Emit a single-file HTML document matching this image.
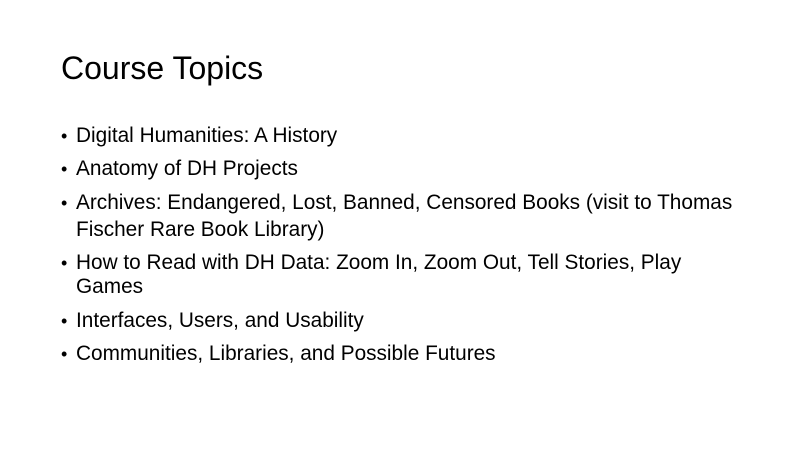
<!DOCTYPE html>
<html><head><style>
body{margin:0;width:800px;height:449px;background:#fff;overflow:hidden;position:relative;font-family:"Liberation Sans",Arial,sans-serif;color:#000}
.t{position:absolute;left:61px;top:50px;font-size:32px;line-height:36px;white-space:nowrap}
.l{position:absolute;left:76px;font-size:20.8px;line-height:20px;white-space:nowrap}
.b{position:absolute;left:61px;font-size:18px;line-height:20px}
</style></head><body>
<div class="t">Course Topics</div>
<div class="b" style="top:126px">•</div><div class="l" style="top:126px">Digital Humanities: A History</div>
<div class="b" style="top:159px">•</div><div class="l" style="top:159px">Anatomy of DH Projects</div>
<div class="b" style="top:193px">•</div><div class="l" style="top:193px">Archives: Endangered, Lost, Banned, Censored Books (visit to Thomas</div>
<div class="l" style="top:220px">Fischer Rare Book Library)</div>
<div class="b" style="top:253px">•</div><div class="l" style="top:253px">How to Read with DH Data: Zoom In, Zoom Out, Tell Stories, Play</div>
<div class="l" style="top:277px">Games</div>
<div class="b" style="top:311px">•</div><div class="l" style="top:311px">Interfaces, Users, and Usability</div>
<div class="b" style="top:344px">•</div><div class="l" style="top:344px">Communities, Libraries, and Possible Futures</div>
</body></html>
